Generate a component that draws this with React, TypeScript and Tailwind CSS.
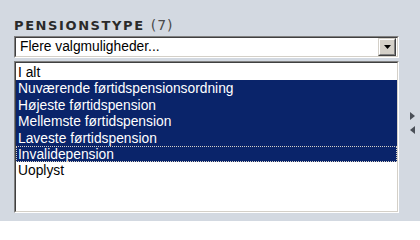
export default function App() {
  const options = [
    { label: "I alt", selected: false },
    { label: "Nuværende førtidspensionsordning", selected: true },
    { label: "Højeste førtidspension", selected: true },
    { label: "Mellemste førtidspension", selected: true },
    { label: "Laveste førtidspension", selected: true },
    { label: "Invalidepension", selected: true, focus: true },
    { label: "Uoplyst", selected: false },
  ];

  return (
    <div className="w-[420px] h-[221px] bg-[#d3d9e1] flex overflow-hidden">
      <div className="w-[399px] pl-[14px] pt-[12px] flex flex-col">
        <div className="flex items-baseline h-[21px] pt-[5px] font-['DejaVu_Sans',Verdana,sans-serif] text-[13px] leading-[16px]">
          <span className="font-bold tracking-[1.6px] text-[#2a2a2a]">PENSIONSTYPE</span>
          <span className="ml-[6px] tracking-[1px] text-[#4a4a4a] text-[14px]">(7)</span>
        </div>

        <div className="mt-[3px] h-[22px] border-t border-l border-t-[#808080] border-l-[#808080] border-b border-r border-b-white border-r-white">
          <div className="h-full border-t border-l border-t-[#404040] border-l-[#404040] border-b border-r border-b-[#d4d0c8] border-r-[#d4d0c8] bg-white flex items-center">
            <span className="flex-1 pl-[4px] font-['Liberation_Sans',Arial,sans-serif] text-[13.8px] text-black leading-none">
              Flere valgmuligheder...
            </span>
            <div className="w-[18px] h-[18px] mr-px border-t border-l border-t-[#d4d0c8] border-l-[#d4d0c8] border-b border-r border-b-[#404040] border-r-[#404040]">
              <div className="w-full h-full bg-[#d4d0c8] border-t border-l border-t-white border-l-white border-b border-r border-b-[#808080] border-r-[#808080] flex items-center justify-center">
                <svg width="7" height="4" viewBox="0 0 7 4">
                  <path d="M0 0h7L3.5 4z" fill="#000" />
                </svg>
              </div>
            </div>
          </div>
        </div>

        <div className="mt-[3px] h-[152px] border-t border-l border-t-[#808080] border-l-[#808080] border-b border-r border-b-white border-r-white">
          <div className="h-full border-t border-l border-t-[#404040] border-l-[#404040] border-b border-r border-b-[#d4d0c8] border-r-[#d4d0c8] bg-white pt-[1px] font-['Liberation_Sans',Arial,sans-serif] text-[13.8px]">
            {options.map((o) => (
              <div
                key={o.label}
                className={`h-[16.4px] leading-[17px] pl-[2px] whitespace-nowrap ${
                  o.selected ? "bg-[#0a246a] text-white" : "text-black"
                } ${o.focus ? "outline-1 outline-dotted outline-[#d4d0c8] -outline-offset-1" : ""}`}
              >
                {o.label}
              </div>
            ))}
          </div>
        </div>
      </div>

      <div className="flex-1 flex flex-col items-center pt-[112px] gap-[6px] pl-[5px]">
        <svg width="5" height="8" viewBox="0 0 5 8">
          <path d="M0 0l5 4-5 4z" fill="#4a4f57" />
        </svg>
        <svg width="5" height="8" viewBox="0 0 5 8">
          <path d="M5 0L0 4l5 4z" fill="#4a4f57" />
        </svg>
      </div>
    </div>
  );
}
